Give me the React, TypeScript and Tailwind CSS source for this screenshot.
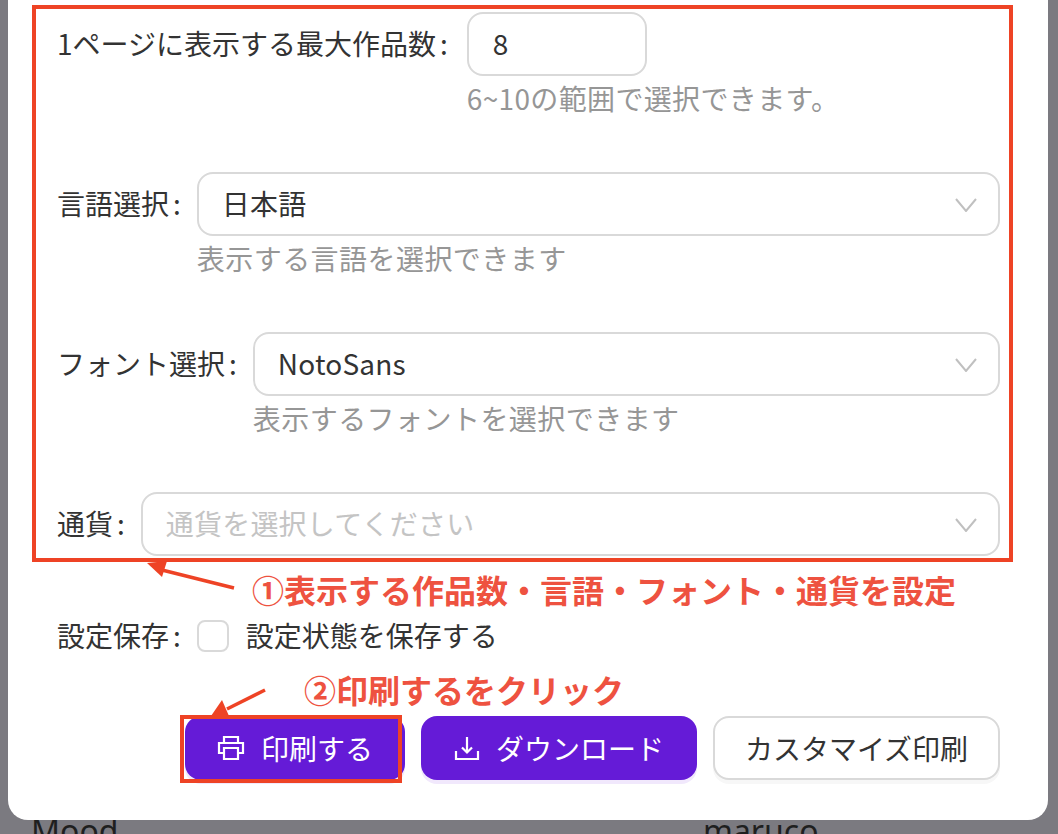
import React from "react";

const font = { fontFamily: '"Noto Sans CJK JP", "Noto Sans", sans-serif' };

function Chevron() {
  return (
    <svg width="22" height="14" viewBox="0 0 22 14" fill="none" className="absolute right-[21px] top-[24px]">
      <path d="M1 1l10 12L21 1" stroke="#c0c0c0" strokeWidth="2" />
    </svg>
  );
}

function Label({ text, wide }: { text: string; wide?: boolean }) {
  return (
    <label className={`flex h-[62px] shrink-0 items-center whitespace-nowrap text-[28px] text-[#333333] ${wide ? "pr-[19px]" : "pr-[16px]"}`}>
      {text}
      <span className="ml-[4px]">:</span>
    </label>
  );
}

function Field({ label, value, placeholder, help }: { label: string; value?: string; placeholder?: string; help?: string }) {
  return (
    <div className="flex h-[160px] items-start">
      <Label text={label} />
      <div className="flex-1">
        <div className="relative flex h-[64px] items-center rounded-[16px] border-2 border-[#d9d9d9] bg-white pb-[2px] pl-[23px] text-[28px]">
          {value ? <span className="tracking-[0.2px] text-[#333333]">{value}</span> : <span className="tracking-[0.2px] text-[#c4c4c4]">{placeholder}</span>}
          <Chevron />
        </div>
        {help && <p className="mt-[4px] text-[28px] leading-[36px] tracking-[0.45px] text-[#969696]">{help}</p>}
      </div>
    </div>
  );
}

function PrinterIcon() {
  return (
    <svg width="28" height="26" viewBox="0 0 28 26" fill="none" stroke="white" strokeWidth="2.2">
      <path d="M7 8V2h14v6" />
      <path d="M7 18H2V8h24v10h-5" />
      <path d="M7 13h14v11H7z" />
    </svg>
  );
}

function DownloadIcon() {
  return (
    <svg width="26" height="26" viewBox="0 0 26 26" fill="none" stroke="white" strokeWidth="2.2">
      <path d="M13 2v15" />
      <path d="M8 12.5l5 5 5-5" />
      <path d="M2 16v8h22v-8" />
    </svg>
  );
}

export default function App() {
  return (
    <div className="relative h-[834px] w-[1058px] overflow-hidden bg-[#7b7a80]" style={font}>
      <div className="relative ml-[8px] mr-[10px] h-[820px] rounded-b-[20px] bg-white pl-[49px] pr-[48px] pt-[12px]">
        <div className="flex h-[160px] items-start">
          <Label text="1ページに表示する最大作品数" wide />
          <div>
            <div className="flex h-[64px] w-[180px] items-center rounded-[16px] border-2 border-[#d9d9d9] bg-white pb-[2px] pl-[24px] text-[28px] text-[#333333]">
              8
            </div>
            <p className="mt-[4px] whitespace-nowrap text-[28px] leading-[36px] tracking-[0.35px] text-[#969696]">
              6~10の範囲で選択できます。
            </p>
          </div>
        </div>
        <Field label="言語選択" value="日本語" help="表示する言語を選択できます" />
        <Field label="フォント選択" value="NotoSans" help="表示するフォントを選択できます" />
        <div className="h-[128px]">
          <Field label="通貨" placeholder="通貨を選択してください" />
        </div>
        <div className="flex h-[32px] items-center text-[28px] text-[#333333]">
          <span className="pb-[2px] pr-[16px]">
            設定保存<span className="ml-[4px]">:</span>
          </span>
          <span className="h-[32px] w-[32px] rounded-[8px] border-2 border-[#d9d9d9] bg-white" />
          <span className="pb-[2px] pl-[17px]">設定状態を保存する</span>
        </div>
        <div className="mt-[64px] flex justify-end gap-[16px] text-[28px]">
          <button className="flex h-[64px] w-[220px] items-center justify-center gap-[16px] rounded-[16px] bg-[#651bd7] text-white shadow-[0_4px_0_#f1e8fc]">
            <PrinterIcon />
            <span>印刷する</span>
          </button>
          <button className="flex h-[64px] w-[276px] items-center justify-center gap-[16px] rounded-[16px] bg-[#651bd7] text-white shadow-[0_4px_0_#f1e8fc]">
            <DownloadIcon />
            <span>ダウンロード</span>
          </button>
          <button className="flex h-[64px] w-[287px] items-center justify-center rounded-[16px] border-2 border-[#d9d9d9] bg-white text-[#333333] shadow-[0_4px_0_#f7f7f7]">
            カスタマイズ印刷
          </button>
        </div>
      </div>

      <div className="flex h-[14px] overflow-hidden text-[32px] leading-[40px] text-[#1f1f1f]" style={{ fontFamily: '"Noto Sans", sans-serif' }}>
        <span className="-mt-[9px] ml-[31px] w-[672px]">Mood</span>
        <span className="-mt-[9px]">maruco</span>
      </div>

      {/* annotations */}
      <div className="absolute left-[32px] top-[5px] h-[557px] w-[981px] border-4 border-[#ee4325]" />
      <div className="absolute left-[180px] top-[715px] h-[68px] w-[222px] border-4 border-[#ee4325]" />
      <div className="absolute left-[252px] top-[567px] whitespace-nowrap text-[32px] font-bold leading-[44px] text-[#ee5240]">
        ①表示する作品数・言語・フォント・通貨を設定
      </div>
      <div className="absolute left-[304px] top-[667px] whitespace-nowrap text-[32px] font-bold leading-[44px] text-[#ee5240]">
        ②印刷するをクリック
      </div>
      <svg className="absolute left-[140px] top-[555px]" width="100" height="35" viewBox="0 0 100 35" fill="none">
        <path d="M94 33L22 15" stroke="#ee4325" strokeWidth="3.5" />
        <path d="M7 8L27 6L22 22Z" fill="#ee4325" />
      </svg>
      <svg className="absolute left-[205px] top-[684px]" width="70" height="34" viewBox="0 0 70 34" fill="none">
        <path d="M60 6L22 25" stroke="#ee4325" strokeWidth="3.5" />
        <path d="M6 32L17 16L24 32Z" fill="#ee4325" />
      </svg>
    </div>
  );
}
